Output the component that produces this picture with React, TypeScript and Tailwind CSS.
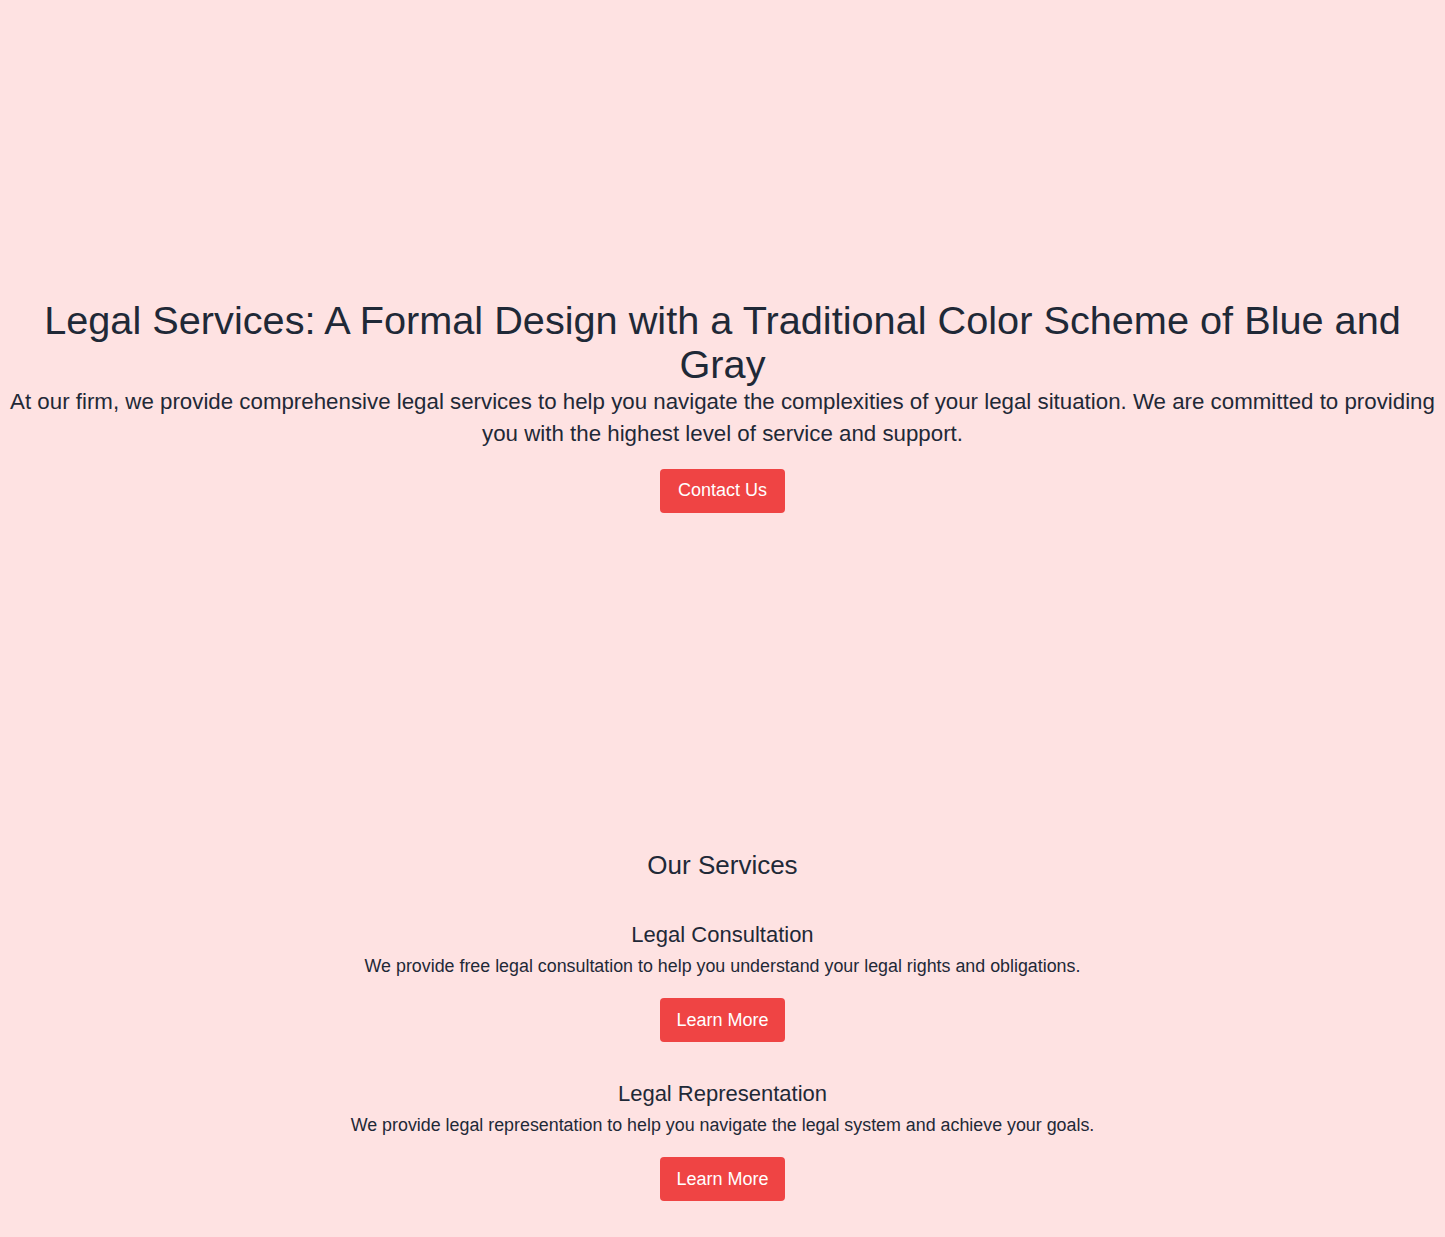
export default function App() {
  return (
    <div className="min-h-screen bg-[#fee2e2] font-['Liberation_Sans',Arial,sans-serif] text-[#1f2937]">
      <section className="flex h-[810px] flex-col items-center justify-center text-center">
        <h1 className="text-[39.7px] leading-[44px]">Legal Services: A Formal Design with a Traditional Color Scheme of Blue and Gray</h1>
        <p className="text-[22.3px] leading-[32px]">At our firm, we provide comprehensive legal services to help you navigate the complexities of your legal situation. We are committed to providing you with the highest level of service and support.</p>
        <button className="mt-[19px] h-[44px] rounded-[4px] bg-[#ef4444] px-[18px] text-[18px] text-white">Contact Us</button>
      </section>
      <section className="flex flex-col items-center pb-10 pt-[39px] text-center">
        <h2 className="mb-10 text-[26px] leading-[32px]">Our Services</h2>
        <div className="mb-[38px] flex flex-col items-center">
          <h3 className="text-[22px] leading-[28px]">Legal Consultation</h3>
          <p className="mt-[3px] text-[17.85px] leading-[28px]">We provide free legal consultation to help you understand your legal rights and obligations.</p>
          <button className="mt-[18px] h-[44px] rounded-[4px] bg-[#ef4444] px-[16.5px] text-[18px] text-white">Learn More</button>
        </div>
        <div className="flex flex-col items-center">
          <h3 className="text-[22px] leading-[28px]">Legal Representation</h3>
          <p className="mt-[3px] text-[17.85px] leading-[28px]">We provide legal representation to help you navigate the legal system and achieve your goals.</p>
          <button className="mt-[18px] h-[44px] rounded-[4px] bg-[#ef4444] px-[16.5px] text-[18px] text-white">Learn More</button>
        </div>
      </section>
    </div>
  );
}
